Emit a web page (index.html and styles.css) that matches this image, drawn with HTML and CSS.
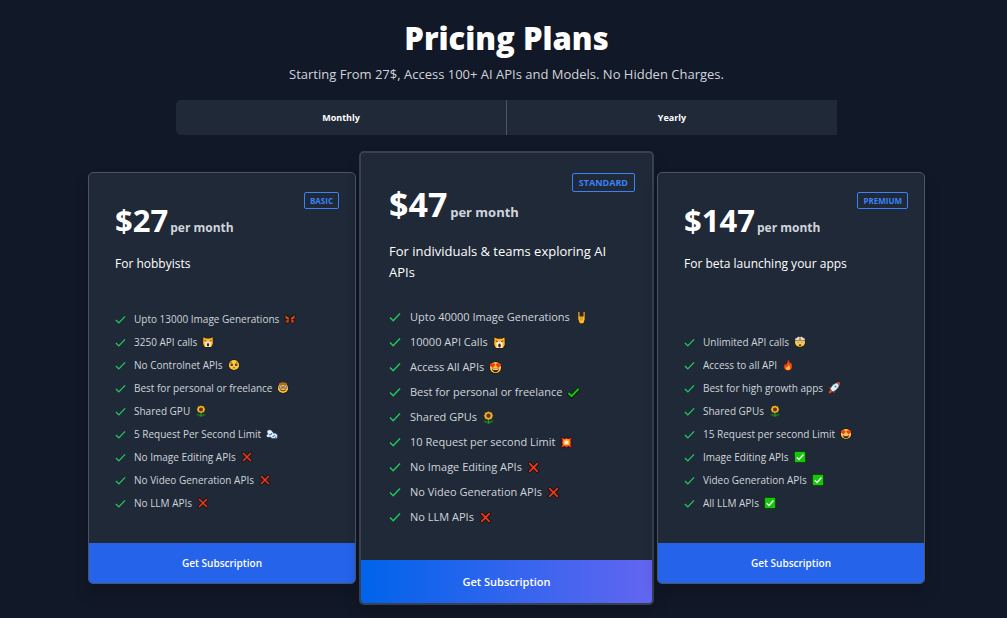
FILE: index.html
```html
<!DOCTYPE html>
<html lang="en">
<head>
<meta charset="utf-8">
<meta name="viewport" content="width=device-width, initial-scale=1">
<title>Pricing Plans</title>
<link rel="stylesheet" href="styles.css">
</head>
<body>
<svg class="sprite" aria-hidden="true">
  <symbol id="tick" viewBox="0 0 12 12"><path d="M1 6.5 4.2 9.7 11 2.6" fill="none" stroke="#22c55e" stroke-width="1.5"/></symbol>
  <symbol id="cross" viewBox="0 0 12 12"><path d="M1.5 1.5 10.5 10.5M10.5 1.5 1.5 10.5" stroke="#160c0c" stroke-width="3"/><path d="M2 2 10 10M10 2 2 10" stroke="#f03a17" stroke-width="1.6"/></symbol>
  <symbol id="check" viewBox="0 0 12 12"><path d="M.8 6.5 4.2 9.7 11.2 2.2" fill="none" stroke="#0a180a" stroke-width="3.4"/><path d="M1.3 6.5 4.2 9.3 10.8 2.5" fill="none" stroke="#16c60c" stroke-width="1.8"/></symbol>
  <symbol id="box" viewBox="0 0 12 12"><path d="M0 0H12V12H0Z" fill="#071c0b"/><path d="M.7.7H11.3V11.3H.7Z" fill="#16c60c"/><path d="M2.7 6.3 5 8.5 9.4 3.5" fill="none" stroke="#fff" stroke-width="1.3"/></symbol>
  <symbol id="butterfly" viewBox="0 0 12 12"><path d="M.3 1.3 3.5 2 6 4.5 8.5 2 11.7 1.3 11 6.2 10.3 7 10.5 10.5 8 11 6 8 4 11 1.5 10.5 1.7 7 1 6.2Z" fill="#2a1210"/><path d="M1.2 2.3 4.8 4.7 5.5 6.5 3.5 6.5 1.8 5.4ZM10.8 2.3 7.2 4.7 6.5 6.5 8.5 6.5 10.2 5.4Z" fill="#d0521c"/><path d="M2.2 7 5.4 6.8 4.2 10 2.2 9.8ZM9.8 7 6.6 6.8 7.8 10 9.8 9.8Z" fill="#b04319"/><path d="M6 3.8V9" stroke="#2a1210"/></symbol>
  <symbol id="cat" viewBox="0 0 12 12"><path d="M.8.2 4 1.8H8L11.2.2 11.5 8 9.8 11.8H2.2L.5 8Z" fill="#2c1d0a"/><path d="M1.4 1.3 4 2.6H8L10.6 1.3 10.9 7.8 9.2 11H2.8L1.1 7.8Z" fill="#ffb62e"/><path d="M3.2 6.4 4.8 4.6 6 6 7.2 4.6 8.8 6.4 8.4 10.8H3.6Z" fill="#fff5df"/><path d="M2.5 4.4 4.5 5.3M9.5 4.4 7.5 5.3" stroke="#50300f" stroke-width=".8"/><ellipse cx="6" cy="8.8" rx="1.2" ry="1.8" fill="#33242a"/><path d="M5.3 6.3H6.7L6 7Z" fill="#df695d"/></symbol>
  <symbol id="face" viewBox="0 0 12 12"><circle cx="6" cy="6" r="5.8" fill="#26190a"/><circle cx="6" cy="6" r="5.1" fill="#ffc83d"/></symbol>
  <symbol id="pleading" viewBox="0 0 12 12"><use href="#face"/><circle cx="3.8" cy="5.8" r="1.3" fill="#38251b"/><circle cx="8.2" cy="5.8" r="1.3" fill="#38251b"/><circle cx="4.1" cy="5.4" r=".4" fill="#fff"/><circle cx="8.5" cy="5.4" r=".4" fill="#fff"/><path d="M2.4 3.8 4 3M8 3 9.6 3.8M4.8 9Q6 8.1 7.2 9" fill="none" stroke="#5c3b13" stroke-width=".7"/></symbol>
  <symbol id="nerd" viewBox="0 0 12 12"><use href="#face"/><path d="M2 1.6Q6-1.2 10 1.6L9.4 3H2.6Z" fill="#b36b24"/><circle cx="3.9" cy="5.4" r="1.6" fill="#fff" stroke="#302016" stroke-width=".7"/><circle cx="8.1" cy="5.4" r="1.6" fill="#fff" stroke="#302016" stroke-width=".7"/><circle cx="4" cy="5.5" r=".6" fill="#302016"/><circle cx="8" cy="5.5" r=".6" fill="#302016"/><path d="M3.3 8Q6 9.8 8.7 8" fill="none" stroke="#5c3013"/></symbol>
  <symbol id="flower" viewBox="0 0 12 12"><path d="M1 9Q4 8 6 10 8 8 11 9 9 12 6 11.8 3 12 1 9Z" fill="#176b20"/><path d="M6 7V11.5" stroke="#26a33a"/><path d="M6 .3 7.6 1 9.3 1.2 9.6 2.9 10.4 4.4 9.6 6 9.1 7.6 7.5 7.8 6 8.5 4.5 7.8 2.9 7.6 2.4 6 1.6 4.4 2.4 2.9 2.7 1.2 4.4 1Z" fill="#f2b52e" stroke="#302207" stroke-width=".6"/><circle cx="6" cy="4.4" r="2" fill="#603418"/></symbol>
  <symbol id="dash" viewBox="0 0 12 12"><path d="M1 3.6Q1.4 1.4 3.6 1.8 5.8 1.6 6.2 3.6 7.6 4 7.4 5.2 9.6 4.6 10.4 6 12 6.6 11.4 8.4 12 10.4 9.8 10.5H6.4Q4.8 10.4 5 9.2L1.6 9.3Q-.2 8.6.6 6.9 1 6 2.2 6 .8 5 1 3.6Z" fill="#e2f2fc" stroke="#142a3c" stroke-width=".5"/><path d="M3 6.6Q5.6 7 5.8 5M6.4 8.6Q8.6 8.6 8.4 6.8M9 9.6 10.4 8.6" fill="none" stroke="#3883b7" stroke-width="1.1"/></symbol>
  <symbol id="hand" viewBox="0 0 12 12"><path d="M2.4.2H4.8V4.3H7.2V.2H9.6V8L8.2 11.9H4L2.4 8Z" fill="#35230c"/><path d="M3.1 1H4.1V5H7.9V1H8.9V7.8L7.7 11.2H4.5L3.1 7.8Z" fill="#ffbd35"/><path d="M5.2 5V7.4M6.7 5V7.4M4 8.2H7" stroke="#a96b17" stroke-width=".6"/></symbol>
  <symbol id="hearts" viewBox="0 0 12 12"><use href="#face"/><path d="M3.5 6.4.8 4Q.7 1.7 3.3 2.4 5.6 1.5 5.6 4Z" fill="#f03a17"/><path d="M8.5 6.4 6.4 4Q6.4 1.5 8.7 2.4 11.3 1.7 11.2 4Z" fill="#f03a17"/><path d="M2.7 7.2H9.3Q8.6 10.3 6 10.3 3.4 10.3 2.7 7.2Z" fill="#4a271b"/><path d="M3.5 7.4H8.5V8.1H3.5Z" fill="#fff"/></symbol>
  <symbol id="boom" viewBox="0 0 12 12"><path d="M0 .5 4 2 6 .5 8 2 12 .5 10.5 4 11.8 6 10.5 8 12 11.5 8 10.3 6 11.8 4 10.3 0 11.5 1.5 8 .2 6 1.5 4Z" fill="#3c1115"/><path d="M1.2 1.5 4.3 2.8 6 1.8 7.7 2.8 10.8 1.5 9.6 4.4 10.5 6 9.6 7.7 10.8 10.5 7.7 9.3 6 10.5 4.3 9.3 1.2 10.5 2.4 7.7 1.5 6 2.4 4.4Z" fill="#ef3a20"/><path d="M3 3.3 6 3 9 3.3 8.8 6 9 8.8 6 8.6 3 8.8 3.2 6Z" fill="#ffb32d"/><circle cx="6" cy="6" r="1.7" fill="#fff8cd"/></symbol>
  <symbol id="explode" viewBox="0 0 12 12"><use href="#face"/><path d="M.8 4.5 1.2 2.2 3 1.8 4 .4 6 1 8 .4 9 1.8 10.8 2.2 11.2 4.5Z" fill="#e7e4df" stroke="#34302b" stroke-width=".5"/><path d="M5.2 1.7H6.8L7.4 4.4H4.6Z" fill="#c98a5a"/><circle cx="4" cy="6.2" r="1.1" fill="#fff"/><circle cx="8" cy="6.2" r="1.1" fill="#fff"/><circle cx="4" cy="6.2" r=".6" fill="#302016"/><circle cx="8" cy="6.2" r=".6" fill="#302016"/><ellipse cx="6" cy="9.2" rx="1.2" ry="1" fill="#55301b"/></symbol>
  <symbol id="fire" viewBox="0 0 12 12"><path d="M5.5.2Q8.2 1.8 8 4L9.2 3.2Q11 6.5 10 9.2 8.8 11.9 6 11.8 2.8 11.8 1.8 9 1.4 6.8 3.2 4.5L4 5.5Q6.1 3 5.5.2Z" fill="#f14b1d" stroke="#3b130c" stroke-width=".5"/><path d="M6.6 5.5Q8.7 8 8 10 6 12 4 10 3.8 8.5 5 7.5L5.6 8.3Q6.8 7.2 6.6 5.5Z" fill="#ffc83d"/></symbol>
  <symbol id="rocket" viewBox="0 0 12 12"><path d="M3.6 4.2.8 5.7 2 7.7ZM7.8 8.4 6.3 11.2 4.3 10Z" fill="#df3b22" stroke="#361417" stroke-width=".4"/><path d="M11.8.2Q11.8 4.8 8.2 8L5 10 2 7 4 3.8Q7.2.2 11.8.2Z" fill="#e3eff6" stroke="#14202b" stroke-width=".5"/><path d="M11.8.2Q11.8 2 11 3.5L8.5 1Q10 .2 11.8.2Z" fill="#ec3a23"/><circle cx="7.5" cy="4.5" r="1" fill="#298ccc"/><path d="M2 7.6 4.4 10 .6 11.4Z" fill="#f4511e"/></symbol>
</svg>

<main class="page">
  <header class="intro">
    <h1 class="title">Pricing Plans</h1>
    <p class="subtitle">Starting From 27$, Access 100+ AI APIs and Models. No Hidden Charges.</p>
  </header>

  <div class="toggle" role="group" aria-label="Billing period">
    <button class="period" type="button">Monthly</button>
    <button class="period" type="button">Yearly</button>
  </div>

  <div class="plans">
    <section class="plan">
      <div class="details">
        <span class="badge">Basic</span>
        <h2 class="price">$27 <span class="per">per month</span></h2>
        <p class="pitch">For hobbyists</p>
        <ul class="features">
          <li><svg class="tick"><use href="#tick"/></svg><span>Upto 13000 Image Generations</span><svg class="emoji"><use href="#butterfly"/></svg></li>
          <li><svg class="tick"><use href="#tick"/></svg><span>3250 API calls</span><svg class="emoji"><use href="#cat"/></svg></li>
          <li><svg class="tick"><use href="#tick"/></svg><span>No Controlnet APIs</span><svg class="emoji"><use href="#pleading"/></svg></li>
          <li><svg class="tick"><use href="#tick"/></svg><span>Best for personal or freelance</span><svg class="emoji"><use href="#nerd"/></svg></li>
          <li><svg class="tick"><use href="#tick"/></svg><span>Shared GPU</span><svg class="emoji"><use href="#flower"/></svg></li>
          <li><svg class="tick"><use href="#tick"/></svg><span>5 Request Per Second Limit</span><svg class="emoji"><use href="#dash"/></svg></li>
          <li><svg class="tick"><use href="#tick"/></svg><span>No Image Editing APIs</span><svg class="emoji"><use href="#cross"/></svg></li>
          <li><svg class="tick"><use href="#tick"/></svg><span>No Video Generation APIs</span><svg class="emoji"><use href="#cross"/></svg></li>
          <li><svg class="tick"><use href="#tick"/></svg><span>No LLM APIs</span><svg class="emoji"><use href="#cross"/></svg></li>
        </ul>
      </div>
      <button class="subscribe" type="button">Get Subscription</button>
    </section>

    <section class="plan featured">
      <div class="details">
        <span class="badge">Standard</span>
        <h2 class="price">$47 <span class="per">per month</span></h2>
        <p class="pitch">For individuals &amp; teams exploring AI APIs</p>
        <ul class="features">
          <li><svg class="tick"><use href="#tick"/></svg><span>Upto 40000 Image Generations</span><svg class="emoji"><use href="#hand"/></svg></li>
          <li><svg class="tick"><use href="#tick"/></svg><span>10000 API Calls</span><svg class="emoji"><use href="#cat"/></svg></li>
          <li><svg class="tick"><use href="#tick"/></svg><span>Access All APIs</span><svg class="emoji"><use href="#hearts"/></svg></li>
          <li><svg class="tick"><use href="#tick"/></svg><span>Best for personal or freelance</span><svg class="emoji"><use href="#check"/></svg></li>
          <li><svg class="tick"><use href="#tick"/></svg><span>Shared GPUs</span><svg class="emoji"><use href="#flower"/></svg></li>
          <li><svg class="tick"><use href="#tick"/></svg><span>10 Request per second Limit</span><svg class="emoji"><use href="#boom"/></svg></li>
          <li><svg class="tick"><use href="#tick"/></svg><span>No Image Editing APIs</span><svg class="emoji"><use href="#cross"/></svg></li>
          <li><svg class="tick"><use href="#tick"/></svg><span>No Video Generation APIs</span><svg class="emoji"><use href="#cross"/></svg></li>
          <li><svg class="tick"><use href="#tick"/></svg><span>No LLM APIs</span><svg class="emoji"><use href="#cross"/></svg></li>
        </ul>
      </div>
      <button class="subscribe" type="button">Get Subscription</button>
    </section>

    <section class="plan">
      <div class="details">
        <span class="badge">Premium</span>
        <h2 class="price">$147 <span class="per">per month</span></h2>
        <p class="pitch">For beta launching your apps</p>
        <ul class="features">
          <li><svg class="tick"><use href="#tick"/></svg><span>Unlimited API calls</span><svg class="emoji"><use href="#explode"/></svg></li>
          <li><svg class="tick"><use href="#tick"/></svg><span>Access to all API</span><svg class="emoji"><use href="#fire"/></svg></li>
          <li><svg class="tick"><use href="#tick"/></svg><span>Best for high growth apps</span><svg class="emoji"><use href="#rocket"/></svg></li>
          <li><svg class="tick"><use href="#tick"/></svg><span>Shared GPUs</span><svg class="emoji"><use href="#flower"/></svg></li>
          <li><svg class="tick"><use href="#tick"/></svg><span>15 Request per second Limit</span><svg class="emoji"><use href="#hearts"/></svg></li>
          <li><svg class="tick"><use href="#tick"/></svg><span>Image Editing APIs</span><svg class="emoji"><use href="#box"/></svg></li>
          <li><svg class="tick"><use href="#tick"/></svg><span>Video Generation APIs</span><svg class="emoji"><use href="#box"/></svg></li>
          <li><svg class="tick"><use href="#tick"/></svg><span>All LLM APIs</span><svg class="emoji"><use href="#box"/></svg></li>
        </ul>
      </div>
      <button class="subscribe" type="button">Get Subscription</button>
    </section>
  </div>
</main>
</body>
</html>
```

FILE: styles.css
```css
* { box-sizing: border-box; }

body {
  margin: 0;
  background: #111827;
  color: #fff;
  font-family: "Open Sans", "Noto Sans", sans-serif;
}

h1, h2, p, ul { margin: 0; padding: 0; }
button { border: 0; color: #fff; font-family: inherit; }

.sprite { position: absolute; width: 0; height: 0; }

.page { padding: 20px 82px 12px 88px; }

.intro { text-align: center; }
.title { font-size: 31px; line-height: 36px; font-weight: 800; }
.subtitle {
  margin-top: 8px;
  color: #d1d5db;
  font-size: 13px;
  line-height: 20px;
}

.toggle { display: flex; margin: 16px 88px 0; }
.period {
  flex: 1;
  height: 35px;
  background: #1f2937;
  font-size: 9px;
  font-weight: 700;
}
.period:first-child {
  border-right: 1px solid #4b5563;
  border-radius: 5px 0 0 5px;
}

.plans {
  display: grid;
  grid-template-columns: 268fr 295fr 268fr;
  gap: 3px;
  align-items: stretch;
  margin-top: 16px;
}
.plan {
  display: flex;
  flex-direction: column;
  margin: 21px 0;
  overflow: hidden;
  border: 1px solid #4b5563;
  border-radius: 5px;
  background: #1f2937;
  box-shadow: 0 10px 15px rgba(0, 0, 0, .16);
}
.details {
  display: flex;
  flex: 1;
  flex-direction: column;
  padding: 19px 16px 31px 26px;
}
.badge {
  align-self: flex-end;
  padding: 0 5px;
  border: 1px solid #3b82f6;
  border-radius: 2px;
  color: #3b82f6;
  font-size: 8px;
  line-height: 15px;
  font-weight: 700;
  text-transform: uppercase;
}
.price { margin-top: -7px; font-size: 31px; line-height: 36px; font-weight: 700; }
.per { margin-left: -6px; color: #d1d5db; font-size: 12px; }
.pitch { margin-top: 8px; font-size: 12px; line-height: 20px; }
.features {
  display: flex;
  flex-direction: column;
  gap: 5px;
  margin-top: auto;
  color: #d1d5db;
  font-size: 10px;
  line-height: 18px;
  list-style: none;
}
.features li { display: flex; align-items: center; white-space: nowrap; }
.tick { width: 11px; height: 11px; margin-right: 8px; }
.emoji { width: 12px; height: 12px; margin-left: 5px; }
.subscribe {
  height: 40px;
  background: #2563eb;
  font-size: 10px;
  font-weight: 600;
}

.featured { margin: 0; border: 2px solid #374151; }
.featured .details { padding: 20px 17px 34px 28px; }
.featured .badge { padding: 0 6px; font-size: 9px; line-height: 17px; }
.featured .price { margin-top: -8px; font-size: 34px; line-height: 40px; }
.featured .per { font-size: 13px; }
.featured .pitch {
  margin-top: 9px;
  padding-right: 16px;
  font-size: 13px;
  line-height: 21px;
}
.featured .features { gap: 7px; margin-top: 25px; font-size: 11px; }
.featured .tick { width: 12px; height: 12px; margin-right: 9px; }
.featured .emoji { width: 13px; height: 13px; }
.featured .subscribe {
  height: 43px;
  background: linear-gradient(90deg, #0063eb, #6366f1);
  font-size: 11px;
}
```
